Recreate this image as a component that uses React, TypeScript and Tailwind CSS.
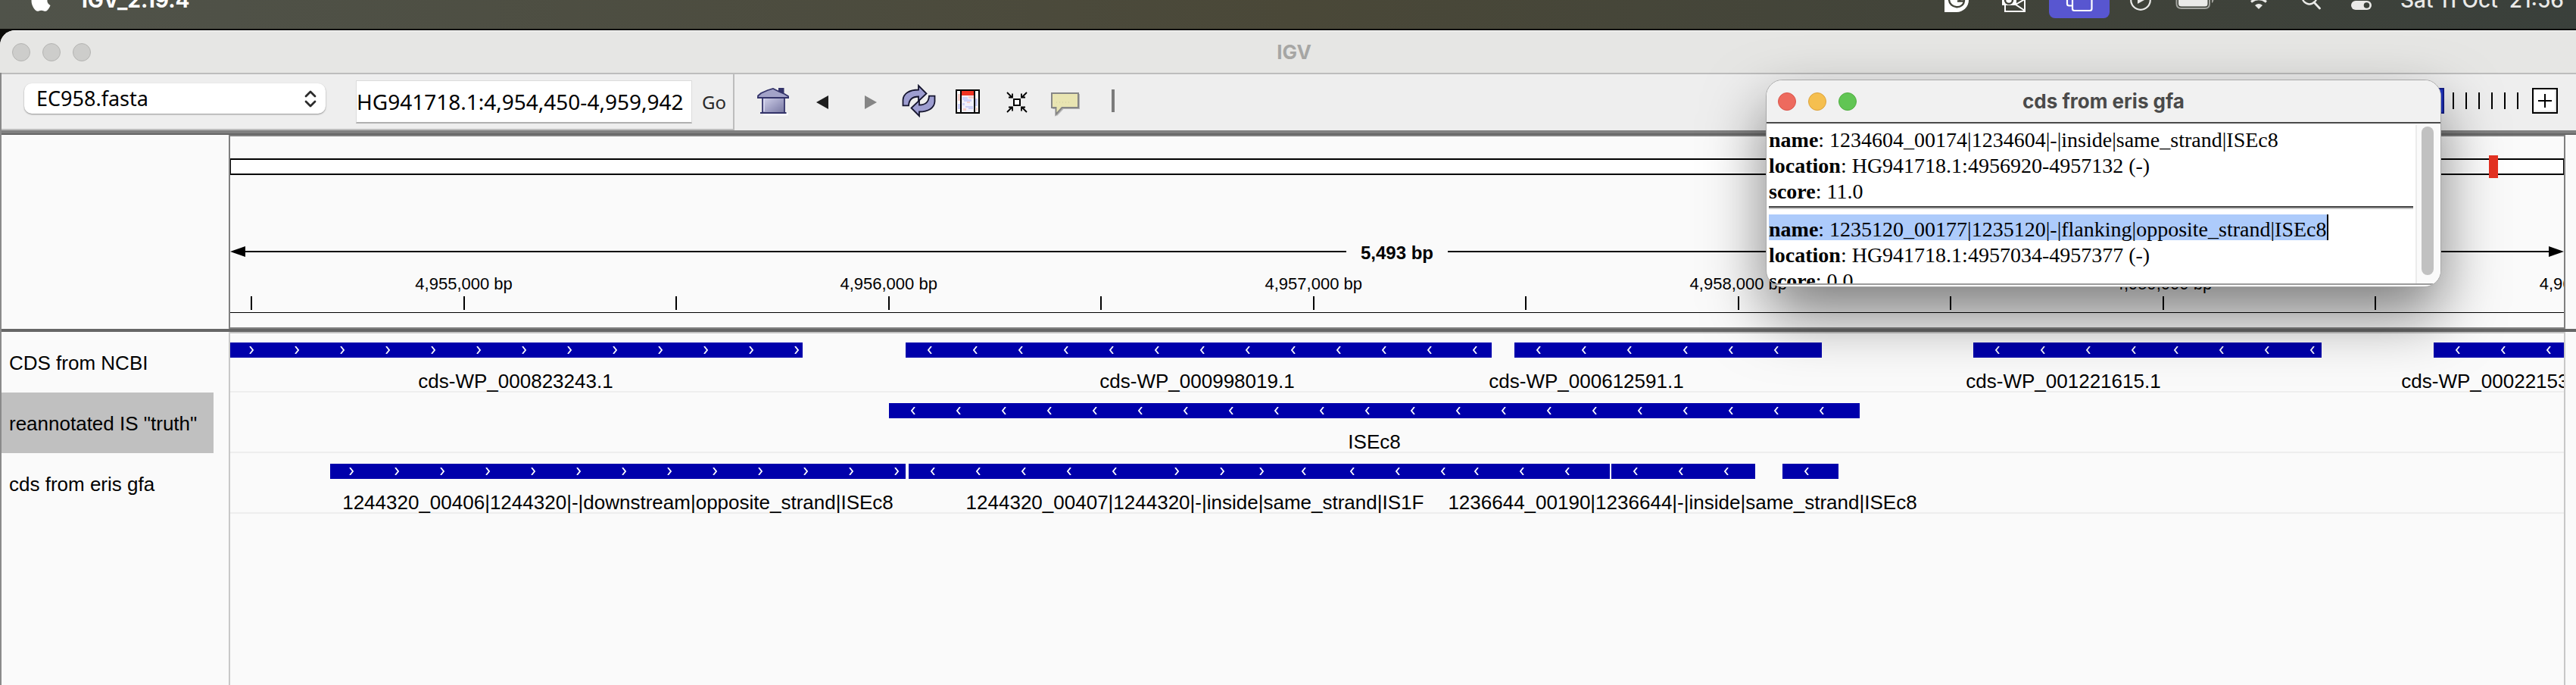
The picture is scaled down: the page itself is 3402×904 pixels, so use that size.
import React from "react";
import { FaApple } from "react-icons/fa";

const VIEW_WIDTH = 3082;
const pct = (x: number) => `${(x / VIEW_WIDTH) * 100}%`;
const series = (start: number, count: number) =>
  Array.from({ length: count }, (_, i) => start + i * 60);

type Feature = {
  start: number;
  end: number;
  forward?: number[];
  reverse?: number[];
};
type Label = { text: string; center: number };
type Track = { name: string; selected?: boolean; features: Feature[]; labels: Label[] };

const tracks: Track[] = [
  {
    name: "CDS from NCBI",
    features: [
      { start: 0, end: 756, forward: series(28, 13) },
      { start: 892, end: 1666, reverse: series(924, 13) },
      { start: 1696, end: 2102, reverse: [...series(1728, 3), ...series(1922, 3)] },
      { start: 2302, end: 2762, reverse: [...series(2334, 4), ...series(2570, 4)] },
      { start: 2910, end: 3082, reverse: series(2942, 3) },
    ],
    labels: [
      { text: "cds-WP_000823243.1", center: 377 },
      { text: "cds-WP_000998019.1", center: 1277 },
      { text: "cds-WP_000612591.1", center: 1791 },
      { text: "cds-WP_001221615.1", center: 2421 },
      { text: "cds-WP_000221530.1", center: 2996 },
    ],
  },
  {
    name: 'reannotated IS "truth"',
    selected: true,
    features: [{ start: 870, end: 2152, reverse: series(902, 21) }],
    labels: [{ text: "ISEc8", center: 1511 }],
  },
  {
    name: "cds from eris gfa",
    features: [
      { start: 132, end: 892, forward: series(160, 13) },
      {
        start: 896,
        end: 1822,
        forward: [1250, 1310, 1362],
        reverse: [...series(928, 5), 1418, ...series(1482, 3), ...series(1646, 3)],
      },
      { start: 1824, end: 2014, reverse: series(1856, 3) },
      { start: 2050, end: 2124, reverse: [2082] },
    ],
    labels: [
      { text: "1244320_00406|1244320|-|downstream|opposite_strand|ISEc8", center: 512 },
      { text: "1244320_00407|1244320|-|inside|same_strand|IS1F", center: 1274 },
      { text: "1236644_00190|1236644|-|inside|same_strand|ISEc8", center: 1918 },
    ],
  },
];

const REGION_START = 4954450;
const REGION_BP = 5493;
const bpPct = (bp: number) => `${((bp - REGION_START) / REGION_BP) * 100}%`;
const ticks = Array.from({ length: 11 }, (_, i) => 4954500 + i * 500);
const rulerLabels = [4955000, 4956000, 4957000, 4958000, 4959000, 4960000];

function MenuIcon({ label, width, children }: { label: string; width: string; children: React.ReactNode }) {
  return (
    <button aria-label={label} className={`flex h-6 shrink-0 justify-center ${width}`}>
      {children}
    </button>
  );
}

function MenuBar() {
  return (
    <header className="flex h-[38px] items-start overflow-hidden bg-linear-to-r from-[#50534a] via-[#4a4838] to-[#3a403b] pr-4 pl-10 text-white">
      <FaApple className="-mt-[17px] h-[34px] w-7 shrink-0" />
      <span className="-mt-[17px] ml-[40px] font-['Inter',sans-serif] text-[28px] leading-[34px] font-bold">IGV_2.19.4</span>
      <div className="ml-auto flex items-start gap-[26px] text-[#eaeae8]">
        <MenuIcon label="Grammarly" width="w-[58px]">
          <svg width="32" height="16" viewBox="0 0 32 16">
            <path d="M0 0H32A16 16 0 0 1 16 16H0Z" fill="#fff" />
            <path d="M6 -1C6 12 26 13 26 0M17 1.500H26M21 1.500L19 -2" fill="none" stroke="#43443a" strokeWidth="2.400" />
          </svg>
        </MenuIcon>
        <MenuIcon label="Mail" width="w-[41px]">
          <svg width="33" height="16" viewBox="0 0 33 16">
            <path d="M5 6V15H31V-1M31 14L19 6L31 -1" fill="none" stroke="#fff" strokeWidth="2" />
            <path d="M1 0H20V7H1Z" fill="#fff" />
            <circle cx="10" cy="0" r="5" fill="none" stroke="#43443a" strokeWidth="2.500" />
          </svg>
        </MenuIcon>
        <button aria-label="Screen mirroring" className="flex h-6 w-20 shrink-0 justify-center rounded-b-lg bg-[#5856d0]">
          <svg width="36" height="16" viewBox="0 0 36 16">
            <path d="M2 -1V5Q2 7.500 4.500 7.500H8M9 -1V11.500Q9 14 11.500 14H32Q34.500 14 34.500 11.500V-1" fill="none" stroke="#fff" strokeWidth="2.200" />
          </svg>
        </button>
        <MenuIcon label="Now playing" width="w-[30px]">
          <svg width="28" height="15" viewBox="0 0 28 15">
            <circle cx="14" cy="0" r="12.800" fill="none" stroke="currentColor" strokeWidth="2.200" />
            <path d="M10 -5V5L19 0Z" fill="currentColor" />
          </svg>
        </MenuIcon>
        <MenuIcon label="Battery" width="w-[62px]">
          <svg width="52" height="13" viewBox="0 0 52 13">
            <path d="M1.500 -1V5Q1.500 11 8 11H39Q45 11 45 5V-1" fill="none" stroke="#a3a49f" strokeWidth="2" />
            <path d="M4 0H42.500V5Q42.500 8.500 39 8.500H8Q4 8.500 4 5Z" fill="currentColor" />
            <path d="M48 0V4Q50 3 50.500 0Z" fill="#a3a49f" />
          </svg>
        </MenuIcon>
        <MenuIcon label="Wi-Fi" width="w-[55px]">
          <svg width="28" height="13" viewBox="0 0 28 13">
            <path d="M14 12L9 7Q14 3 19 7Z" fill="currentColor" />
            <path d="M4 2.500Q14 -5 24 2.500" fill="none" stroke="currentColor" strokeWidth="3" />
          </svg>
        </MenuIcon>
        <MenuIcon label="Search" width="w-[31px]">
          <svg width="26" height="13" viewBox="0 0 26 13">
            <circle cx="11" cy="-4" r="9.500" fill="none" stroke="currentColor" strokeWidth="2.400" />
            <path d="M17 3L24.500 11" stroke="currentColor" strokeWidth="2.800" strokeLinecap="round" />
          </svg>
        </MenuIcon>
        <MenuIcon label="Control Center" width="w-[50px]">
          <svg width="27" height="14" viewBox="0 0 27 14">
            <rect x="0" y="1" width="27" height="12" rx="6" fill="currentColor" />
            <circle cx="20.500" cy="7" r="3.800" fill="#3c413a" />
          </svg>
        </MenuIcon>
        <span className="-mt-[17px] font-['Inter',sans-serif] text-[28px] leading-[34px] font-medium whitespace-pre">Sat 11 Oct  21:56</span>
      </div>
    </header>
  );
}

function ToolButton({ label, children }: { label: string; children: React.ReactNode }) {
  return (
    <button aria-label={label} className="flex w-16 items-center justify-center">
      <svg width="48" height="48" viewBox="0 0 48 48">
        {children}
      </svg>
    </button>
  );
}

const REFRESH_ARROW =
  "M3.500 29.300V22C4 13.500 12 8.500 24 8.500V3L34.500 13.500L24 23.500V17.500C16 17.500 11.500 21 11 29.300Z";

function Toolbar() {
  return (
    <div className="flex h-[74px] bg-[#eeeeee]">
      <div className="flex items-start border-r-2 border-b-2 border-[#bdbdbd]">
        <div className="relative mt-3 ml-[30px]">
          <select
            aria-label="Genome"
            className="h-10 w-[398px] appearance-none rounded-[10px] bg-white pl-4 font-['Noto_Sans',sans-serif] text-[27px] leading-[40px] text-black shadow-[0_1px_2px_rgba(0,0,0,0.4)]"
          >
            <option>EC958.fasta</option>
          </select>
          <svg className="pointer-events-none absolute top-2 right-3" width="16" height="26" viewBox="0 0 16 26">
            <path d="M2 9L8 3L14 9M2 16L8 22L14 16" fill="none" stroke="#2b2b2b" strokeWidth="2.800" strokeLinecap="round" strokeLinejoin="round" />
          </svg>
        </div>
        <input
          aria-label="Locus"
          defaultValue="HG941718.1:4,954,450-4,959,942"
          className="mt-2 ml-10 h-[57px] w-[444px] border border-b-2 border-[#dcdcdc] border-b-[#b0b0b0] bg-white font-['Noto_Sans',sans-serif] text-[28px] text-black outline-none"
        />
        <button className="mt-2 h-[57px] w-[54px] pl-1 text-center font-['Noto_Sans',sans-serif] text-[24px] text-[#2a2a2a]">Go</button>
      </div>
      <div className="flex pb-0.5 pl-[19px]">
        <ToolButton label="Home">
          <defs>
            <linearGradient id="houseFill" x1="0" y1="0" x2="1" y2="1">
              <stop offset="0" stopColor="#d2d2ea" />
              <stop offset="0.6" stopColor="#9a9abf" />
              <stop offset="1" stopColor="#77779f" />
            </linearGradient>
          </defs>
          <path d="M11 41.500H43V39" fill="none" stroke="#fff" strokeWidth="1.500" />
          <path d="M31 6H38.500V14H31Z" fill="#34346a" />
          <path d="M10 19H39V39H10Z" fill="url(#houseFill)" stroke="#34346a" strokeWidth="1.800" />
          <path d="M4 16.500L8 13L17 9L24 7L32 11L39 14L44 17V19H4Z" fill="#a3a3c8" stroke="#34346a" strokeWidth="1.800" />
          <path d="M3 19H45M7 39H41.500" stroke="#34346a" strokeWidth="2" />
          <path d="M12 21V37" stroke="#dcdcf4" strokeWidth="1.500" />
        </ToolButton>
        <ToolButton label="Back">
          <path d="M17 25L33 16V34Z" fill="#1e1e1e" />
        </ToolButton>
        <ToolButton label="Forward">
          <path d="M33 25L17 16V34Z" fill="#858585" />
        </ToolButton>
        <ToolButton label="Refresh">
          <path d={REFRESH_ARROW} fill="#9d9dd0" stroke="#15152e" strokeWidth="1.800" />
          <path d={REFRESH_ARROW} transform="rotate(180 24.500 23)" fill="#9d9dd0" stroke="#15152e" strokeWidth="1.800" />
        </ToolButton>
        <ToolButton label="Define a region of interest">
          <rect x="10" y="9" width="30" height="30" fill="#fff" stroke="#000" strokeWidth="2" />
          <path d="M17 16H33V38H17Z" fill="#f1f1fc" />
          <path d="M18 18H25V21H30V24H20V22H18ZM22 30H32V34H26V32H22ZM18 26H21V29H18ZM12 27H15V34H12ZM35 20H38V30H35Z" fill="#cdd0f7" />
          <path d="M26 17H33V20H26ZM24 24H28V26H24ZM19 33H23V36H19ZM12 14H15V23H12ZM36 32H38V36H36Z" fill="#f6cfc9" />
          <path d="M17 10H33V16H17Z" fill="#ee3322" />
          <path d="M16 9V39M34 9V39" stroke="#000" strokeWidth="2" />
        </ToolButton>
        <ToolButton label="Resize tracks to fit">
          <rect x="22" y="21" width="8" height="8" fill="#fff" stroke="#000" strokeWidth="2" />
          <path
            d="M13 12L20 19M15 18.500H20V13.500M39 12L32 19M37 18.500H32V13.500M13 38L20 31M15 31.500H20V36.500M39 38L32 31M37 31.500H32V36.500"
            fill="none"
            stroke="#000"
            strokeWidth="1.800"
          />
        </ToolButton>
        <ToolButton label="Popup text behavior">
          <path d="M9 14H45V34H23.500L14.500 43.500V34H9Z" fill="#b5b5b5" />
          <path d="M8 13H43V32H21.500L13.500 41V32H8Z" fill="#e9e5b2" stroke="#868686" strokeWidth="2" />
          <path d="M14 25H34" stroke="#cfcba0" strokeWidth="1" strokeDasharray="1 3" />
        </ToolButton>
        <ToolButton label="Show ruler line">
          <path d="M23 8H27V38H23Z" fill="#7b7b7b" />
        </ToolButton>
      </div>
      <div className="mr-6 ml-auto flex items-center gap-[18px] pb-1">
        <div className="relative flex items-center gap-[11px]">
          <span className="h-[34px] w-3 border-2 border-[#16208a] bg-[#2036c8]" />
          <div className="flex gap-[15px]">
            {series(0, 6).map((n) => (
              <span key={n} className="h-[22px] w-0.5 bg-black" />
            ))}
          </div>
          <input type="range" aria-label="Zoom" className="absolute inset-0 w-full opacity-0" />
        </div>
        <button aria-label="Zoom in" className="flex size-[34px] items-center justify-center border-2 border-black bg-white shadow-[inset_-2px_-2px_0_#e6e6e6]">
          <svg width="18" height="18" viewBox="0 0 18 18">
            <path d="M9 0V18M0 9H18" stroke="#000" strokeWidth="2" />
          </svg>
        </button>
      </div>
    </div>
  );
}

function Header() {
  return (
    <div className="flex h-64">
      <div className="w-[302px] shrink-0 border-r-2 border-[#808080]" />
      <div className="min-w-0 flex-1 overflow-hidden border-y-2 border-[#808080] pt-[29px]">
        <div className="relative h-[22px] border-x border-y-2 border-black bg-white">
          <div className="absolute -top-1.5 h-[30px] w-3 bg-[#e63222]" style={{ left: pct(2984) }} />
        </div>
        <div className="mt-[86px] flex h-[30px] items-center">
          <svg width="20" height="14" viewBox="0 0 20 14">
            <path d="M0 7L20 0V14Z" />
          </svg>
          <div className="h-0.5 flex-1 bg-black" />
          <span className="px-[19px] pt-1 text-[24px] leading-[26px] font-bold">5,493 bp</span>
          <div className="h-0.5 flex-1 bg-black" />
          <svg width="20" height="14" viewBox="0 0 20 14">
            <path d="M20 7L0 0V14Z" />
          </svg>
        </div>
        <div className="relative h-[66px] overflow-hidden border-b border-black">
          {rulerLabels.map((bp) => (
            <span key={bp} className="absolute top-4 -translate-x-1/2 text-[22px] leading-[24px] whitespace-nowrap" style={{ left: bpPct(bp) }}>
              {bp.toLocaleString("en-US")} bp
            </span>
          ))}
          {ticks.map((bp) => (
            <span key={bp} className="absolute bottom-[3px] h-[18px] w-0.5 -translate-x-1/2 bg-black" style={{ left: bpPct(bp) }} />
          ))}
        </div>
      </div>
      <div className="w-4 shrink-0 border-l-2 border-[#808080]" />
    </div>
  );
}

function Chevron({ left, forward }: { left: number; forward?: boolean }) {
  return (
    <svg className="absolute top-[5px] -ml-[3px]" style={{ left: pct(left) }} width="6" height="10" viewBox="0 0 6 10">
      <path d={forward ? "M1 0L5 5L1 10" : "M5 0L1 5L5 10"} fill="none" stroke="#fff" strokeWidth="1.800" />
    </svg>
  );
}

function TrackRow({ track }: { track: Track }) {
  return (
    <div className="relative h-20 border-b-2 border-[#eeeeee]">
      <div className="absolute inset-x-0 top-[14px] h-5">
        {track.features.map((f) => (
          <div key={f.start} className="absolute inset-y-0 bg-[#0000ab]" style={{ left: pct(f.start), width: pct(f.end - f.start) }} />
        ))}
        {track.features.flatMap((f) => [
          ...(f.forward ?? []).map((x) => <Chevron key={x} left={x} forward />),
          ...(f.reverse ?? []).map((x) => <Chevron key={x} left={x} />),
        ])}
      </div>
      {track.labels.map((l) => (
        <span key={l.text} className="absolute top-[50px] -translate-x-1/2 text-[26px] leading-[30px] whitespace-nowrap" style={{ left: pct(l.center) }}>
          {l.text}
        </span>
      ))}
    </div>
  );
}

function Tracks() {
  return (
    <div className="flex flex-1">
      <div className="w-[302px] shrink-0 border-r-2 border-[#c8c8c8] pr-5">
        {tracks.map((t) => (
          <div key={t.name} className={`flex h-20 items-center pt-0.5 pl-2.5 text-[26px] whitespace-nowrap ${t.selected ? "bg-[#c0c0c0]" : ""}`}>
            {t.name}
          </div>
        ))}
      </div>
      <div className="min-w-0 flex-1 overflow-hidden shadow-[inset_0_2px_0_#c4c4c4]">
        {tracks.map((t) => (
          <TrackRow key={t.name} track={t} />
        ))}
      </div>
      <div className="w-4 shrink-0 border-l-2 border-[#c8c8c8]" />
    </div>
  );
}

function Field({ name, children }: { name: string; children: React.ReactNode }) {
  return (
    <p className="pt-1.5 leading-[28px] whitespace-nowrap">
      <b>{name}</b>: {children}
    </p>
  );
}

function FeaturePopup() {
  return (
    <section
      aria-label="cds from eris gfa"
      className="absolute top-[105px] right-[178px] w-[892px] overflow-hidden rounded-[22px] border border-[#a8a8a8] bg-white shadow-[0_36px_80px_rgba(0,0,0,0.5)]"
    >
      <div className="relative flex h-[57px] items-center justify-center border-b-2 border-[#4a4a4a] bg-[#f1f1f1]">
        <div className="absolute left-[15px] flex gap-4">
          <button aria-label="Close" className="size-6 rounded-full border border-[#d9554b] bg-[#ed6a5e]" />
          <button aria-label="Minimize" className="size-6 rounded-full border border-[#dba23c] bg-[#f5bf4f]" />
          <button aria-label="Zoom window" className="size-6 rounded-full border border-[#50ad41] bg-[#61c554]" />
        </div>
        <h2 className="font-['Inter',sans-serif] text-[26px] leading-[32px] font-bold text-[#4a4a4a]">cds from eris gfa</h2>
      </div>
      <div className="flex h-[213px] overflow-hidden border-b-2 border-[#9c9c9c]">
        <div className="flex-1 pt-0.5 pl-[3px] font-['Liberation_Serif',serif] text-[28px]">
          <Field name="name">1234604_00174|1234604|-|inside|same_strand|ISEc8</Field>
          <Field name="location">HG941718.1:4956920-4957132 (-)</Field>
          <Field name="score">11.0</Field>
          <hr className="mt-[5px] mb-[7px] h-1 border-t-2 border-b-2 border-t-[#444444] border-b-[#c4c4c4]" />
          <div className="w-fit border-r-2 border-black bg-[#adcbfb]">
            <Field name="name">1235120_00177|1235120|-|flanking|opposite_strand|ISEc8</Field>
          </div>
          <Field name="location">HG941718.1:4957034-4957377 (-)</Field>
          <Field name="score">0.0</Field>
        </div>
        <div className="mt-0.5 ml-[3px] w-[33px] border-l-2 border-[#ebebeb] bg-[#fafafa] pt-0.5 pl-1.5">
          <div className="h-[196px] w-4 rounded-full bg-[#c1c1c1]" />
        </div>
      </div>
      <div className="h-0.5" />
    </section>
  );
}

export default function App() {
  return (
    <div className="relative flex min-h-screen flex-col overflow-hidden bg-[#0b0b08] font-['Liberation_Sans',sans-serif] text-black">
      <MenuBar />
      <main className="mt-0.5 flex flex-1 flex-col overflow-hidden rounded-tl-[20px] bg-[#fafafa]">
        <div className="relative flex h-14 shrink-0 items-center justify-center border-t border-t-white bg-[#e6e6e4] pl-4">
          <div className="absolute left-4 flex gap-4">
            <button aria-label="Close" className="size-6 rounded-full border border-[#b4b4b2] bg-[#cdcdcb]" />
            <button aria-label="Minimize" className="size-6 rounded-full border border-[#b4b4b2] bg-[#cdcdcb]" />
            <button aria-label="Zoom window" className="size-6 rounded-full border border-[#b4b4b2] bg-[#cdcdcb]" />
          </div>
          <h1 className="font-['Inter',sans-serif] text-[26px] leading-[32px] font-bold text-[#a6a6a4]">IGV</h1>
        </div>
        <div className="flex flex-1 flex-col border-l-2 border-[#8a8a8a]">
          <div className="h-0.5 bg-[#bdbdbd]" />
          <Toolbar />
          <div className="h-1.5 border-b-2 border-[#666666] bg-[#808080]" />
          <Header />
          <div className="h-1 bg-[#666666]" />
          <Tracks />
        </div>
      </main>
      <FeaturePopup />
    </div>
  );
}
